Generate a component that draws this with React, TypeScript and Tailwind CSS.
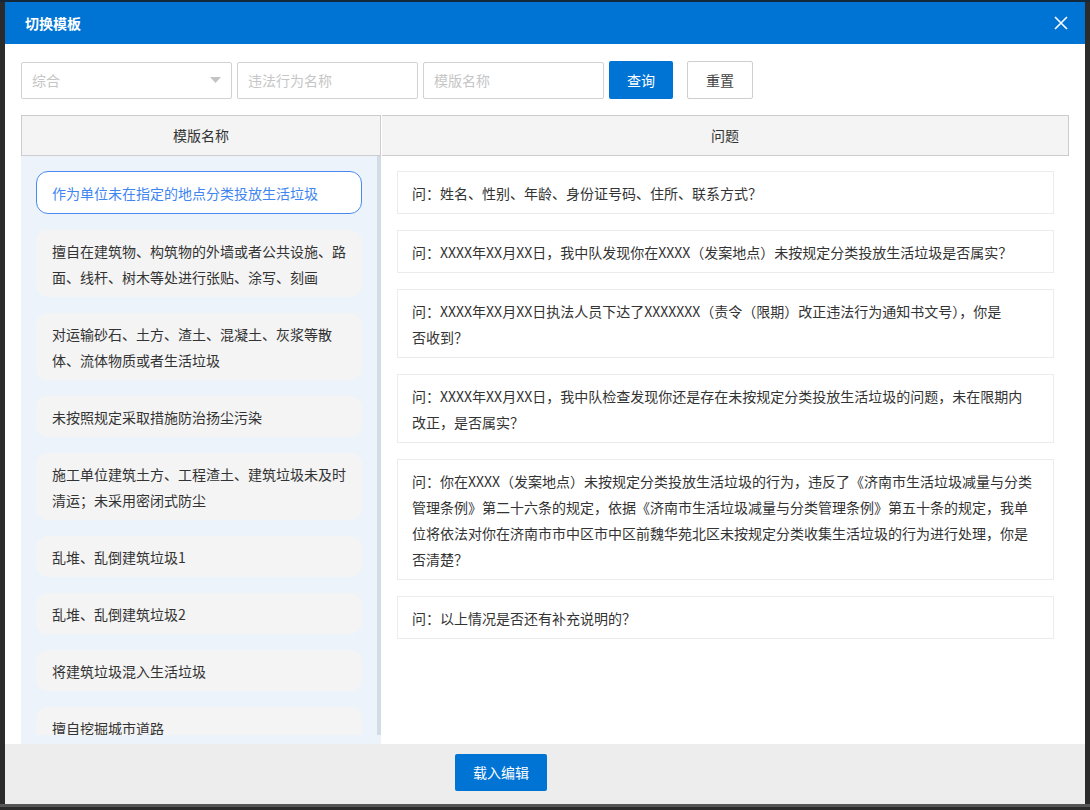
import React from "react";

const leftItems: string[][] = [
  ["作为单位未在指定的地点分类投放生活垃圾"],
  ["擅自在建筑物、构筑物的外墙或者公共设施、路", "面、线杆、树木等处进行张贴、涂写、刻画"],
  ["对运输砂石、土方、渣土、混凝土、灰浆等散", "体、流体物质或者生活垃圾"],
  ["未按照规定采取措施防治扬尘污染"],
  ["施工单位建筑土方、工程渣土、建筑垃圾未及时", "清运；未采用密闭式防尘"],
  ["乱堆、乱倒建筑垃圾1"],
  ["乱堆、乱倒建筑垃圾2"],
  ["将建筑垃圾混入生活垃圾"],
  ["擅自挖掘城市道路"],
];

const rightItems: string[][] = [
  ["问：姓名、性别、年龄、身份证号码、住所、联系方式？"],
  ["问：XXXX年XX月XX日，我中队发现你在XXXX（发案地点）未按规定分类投放生活垃圾是否属实？"],
  ["问：XXXX年XX月XX日执法人员下达了XXXXXXX（责令（限期）改正违法行为通知书文号），你是", "否收到？"],
  ["问：XXXX年XX月XX日，我中队检查发现你还是存在未按规定分类投放生活垃圾的问题，未在限期内", "改正，是否属实？"],
  [
    "问：你在XXXX（发案地点）未按规定分类投放生活垃圾的行为，违反了《济南市生活垃圾减量与分类",
    "管理条例》第二十六条的规定，依据《济南市生活垃圾减量与分类管理条例》第五十条的规定，我单",
    "位将依法对你在济南市市中区市中区前魏华苑北区未按规定分类收集生活垃圾的行为进行处理，你是",
    "否清楚？",
  ],
  ["问：以上情况是否还有补充说明的？"],
];

export default function App() {
  return (
    <div className="w-[1090px] h-[810px] bg-[#2b2b2b] flex flex-col overflow-hidden font-['Noto_Sans_CJK_SC','Noto_Sans',sans-serif] text-[14px] text-[#333]">
      <div className="h-[2px] bg-[#14283c] shrink-0" />
      <div className="flex">
        <div className="w-[5px] shrink-0" />
        <div className="w-[1080px] h-[802px] bg-white flex flex-col">
          {/* header */}
          <div className="h-[42px] bg-[#0074d5] flex items-center justify-between pl-5 pr-[17px] shrink-0">
            <span className="text-white font-bold text-[14px]">切换模板</span>
            <svg width="14" height="14" viewBox="0 0 14 14" fill="none" stroke="white" strokeWidth="1.6">
              <path d="M1 1 L13 13 M13 1 L1 13" />
            </svg>
          </div>
          {/* body */}
          <div className="flex-1 flex flex-col px-4 pt-[17px]">
            <div className="flex items-center h-[38px]">
              <div className="w-[211px] h-[37px] border border-[#d2d2d2] rounded-[2px] flex items-center justify-between pl-[10px] pr-[10px]">
                <span className="text-[#c6c6c6]">综合</span>
                <svg width="11" height="6" viewBox="0 0 11 6">
                  <path d="M0 0 L11 0 L5.5 6 Z" fill="#c4c4c4" />
                </svg>
              </div>
              <div className="ml-[5px] w-[181px] h-[37px] border border-[#d2d2d2] rounded-[2px] flex items-center pl-[10px]">
                <span className="text-[#c6c6c6]">违法行为名称</span>
              </div>
              <div className="ml-[5px] w-[181px] h-[37px] border border-[#d2d2d2] rounded-[2px] flex items-center pl-[10px]">
                <span className="text-[#c6c6c6]">模版名称</span>
              </div>
              <div className="ml-[5px] w-[64px] h-[38px] bg-[#0074d5] rounded-[2px] flex items-center justify-center text-white">
                查询
              </div>
              <div className="ml-[14px] w-[66px] h-[38px] border border-[#cfcfcf] rounded-[2px] flex items-center justify-center text-[#444]">
                重置
              </div>
            </div>
            {/* table */}
            <div className="mt-[16px] flex flex-col flex-1">
              <div className="flex h-[41px] shrink-0">
                <div className="w-[360px] border border-[#cccccc] bg-[#f4f4f4] flex items-center justify-center">
                  模版名称
                </div>
                <div className="flex-1 border border-l-0 border-[#cccccc] bg-[#f4f4f4] flex items-center justify-center ml-[1px]">
                  问题
                </div>
              </div>
              <div className="flex flex-1">
                <div className="w-[360px] bg-[#ecf3fa] flex flex-col">
                  <div className="flex h-[579px]">
                    <div className="w-[356px] h-[579px] overflow-hidden flex flex-col gap-4 px-[15px] pt-[15px]">
                      {leftItems.map((lines, i) => (
                        <div
                          key={i}
                          className={
                            i === 0
                              ? "w-[326px] shrink-0 rounded-[12px] border border-[#4a8af0] bg-white px-[15px] py-[7.5px] leading-[26px] text-[#3f86f0]"
                              : "w-[326px] shrink-0 rounded-[12px] bg-[#f4f4f4] px-4 py-[7.5px] leading-[26px] text-[#333]"
                          }
                        >
                          {lines.map((l, j) => (
                            <div key={j} className="whitespace-nowrap">{l}</div>
                          ))}
                        </div>
                      ))}
                    </div>
                    <div className="w-[4px] h-[579px] bg-[#d3dce6]" />
                  </div>
                </div>
                <div className="flex-1 ml-[1px] flex flex-col gap-4 p-[15px]">
                  {rightItems.map((lines, i) => (
                    <div key={i} className="border border-[#ececec] pl-[14px] pr-[15px] py-[7.5px] leading-[26px] text-[#333]">
                      {lines.map((l, j) => (
                        <div key={j} className="whitespace-nowrap">{l}</div>
                      ))}
                    </div>
                  ))}
                </div>
              </div>
            </div>
          </div>
          {/* footer */}
          <div className="h-[60px] bg-[#ededed] shrink-0 pl-[450px] pt-[10px]">
            <div className="w-[92px] h-[37px] bg-[#0074d5] rounded-[2px] flex items-center justify-center text-white">
              载入编辑
            </div>
          </div>
        </div>
        <div className="w-[5px] shrink-0" />
      </div>
      <div className="h-[3px] bg-[#555] shrink-0" />
    </div>
  );
}
